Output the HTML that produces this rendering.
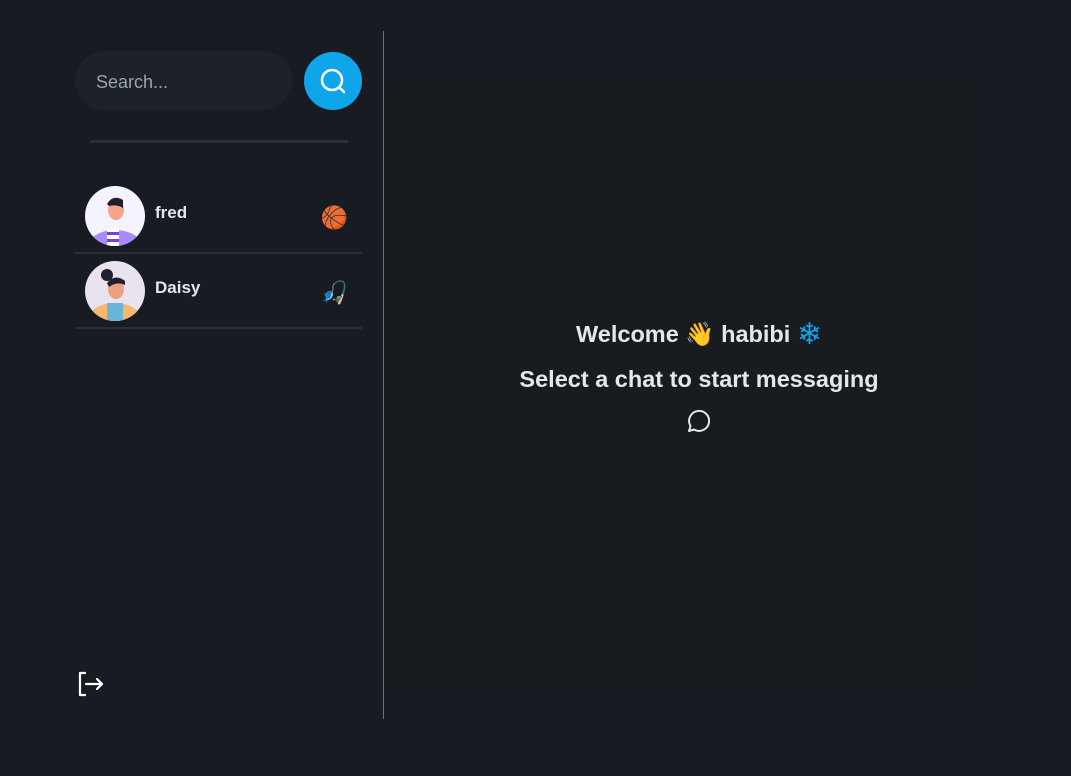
<!DOCTYPE html>
<html><head><meta charset="utf-8"><style>
body{margin:0;width:1071px;height:776px;background:#181b21;font-family:"Liberation Sans","DejaVu Sans",sans-serif;position:relative;overflow:hidden;color:#e5e7eb}
.abs{position:absolute}
.search{left:75px;top:51px;width:217px;height:59px;border-radius:30px;background:#1d2229;}
.search span{position:absolute;left:21px;top:21px;font-size:18px;color:#9ca3af}
.btn{left:304px;top:52px;width:58px;height:58px;border-radius:50%;background:#0ea5e9}
.hr{left:90px;top:140px;width:258px;height:3px;background:#2a2e35}
.vl{left:383px;top:31px;width:1px;height:688px;background:#6b7280}
.row{left:75px;width:287px;height:73px;border-bottom:2px solid #2a2e35}
.av{position:absolute;left:10px;top:7px;width:60px;height:60px;border-radius:50%;overflow:hidden}
.nm{position:absolute;left:80px;top:24px;font-weight:bold;font-size:17px;color:#e5e7eb}
.em{position:absolute;right:14px;top:26px;font-size:22px}
.t1{left:384px;width:630px;text-align:center;top:320px;font-size:23.5px;font-weight:bold;color:#e5e7eb}
.t2{left:384px;width:630px;text-align:center;top:366px;font-size:23.5px;font-weight:bold;color:#e5e7eb}
</style></head><body>
<div class="abs" style="left:384px;top:70px;width:594px;height:630px;background:#181c20"></div>
<div class="abs search"><span>Search...</span></div>
<div class="abs btn"><svg width="58" height="58" viewBox="0 0 58 58"><circle cx="28" cy="28" r="10" fill="none" stroke="#fff" stroke-width="2.5"/><path d="M35 35l5 5" stroke="#fff" stroke-width="2.5" stroke-linecap="round"/></svg></div>
<div class="abs hr"></div>
<div class="abs vl"></div>
<div class="abs row" style="top:179px">
 <div class="av" style="background:#f5f3ff"><svg width="60" height="60"><ellipse cx="30" cy="62" rx="28" ry="18" fill="#a78bfa"/><rect x="22" y="42" width="12" height="18" fill="#fff"/><rect x="22" y="46" width="12" height="3" fill="#7c3aed"/><rect x="22" y="53" width="12" height="3" fill="#7c3aed"/><ellipse cx="31" cy="24" rx="8" ry="10" fill="#f4a58a"/><path d="M22 18q6-10 16-4l0 8q-6-4-14-2z" fill="#1f1f2e"/></svg></div>
 <div class="nm">fred</div><div class="em" style="font-size:22px">🏀</div>
</div>
<div class="abs row" style="top:254px">
 <div class="av" style="background:#e9e3ef"><svg width="60" height="60"><ellipse cx="30" cy="64" rx="30" ry="22" fill="#f6b96b"/><rect x="22" y="42" width="16" height="18" fill="#6bb6d8"/><ellipse cx="31" cy="28" rx="8" ry="10" fill="#e9a07f"/><circle cx="22" cy="14" r="6" fill="#1f1f2e"/><path d="M22 22q8-10 18-2l0 4q-8-4-16 2z" fill="#1f1f2e"/></svg></div>
 <div class="nm">Daisy</div><div class="em">🎣</div>
</div>
<div class="abs" style="left:77px;top:671px"><svg width="28" height="28" viewBox="0 0 28 28" fill="none" stroke="#fff" stroke-width="2.2" stroke-linecap="round" stroke-linejoin="round"><path d="M8 2H3v22h5"/><path d="M9 13h16M20 8l5 5-5 5"/></svg></div>
<div class="abs t1">Welcome 👋 habibi <span style="color:#0ea5e9;font-size:30px;line-height:20px;vertical-align:-2px">❄</span></div>
<div class="abs t2">Select a chat to start messaging</div>
<div class="abs" style="left:685px;top:406px"><svg width="28" height="28" viewBox="0 0 28 28" fill="none" stroke="#e5e7eb" stroke-width="2" stroke-linejoin="round"><path d="M4 25l1.5-5A10 10 0 1 1 9 23.5z"/></svg></div>
</body></html>
